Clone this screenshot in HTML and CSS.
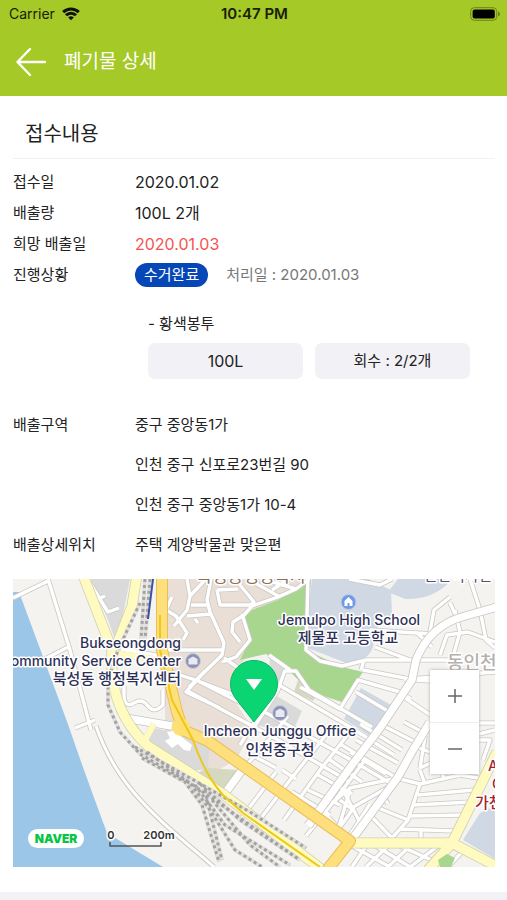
FILE: index.html
```html
<!DOCTYPE html>
<html lang="ko">
<head>
<meta charset="utf-8">
<meta name="viewport" content="width=device-width, initial-scale=1">
<title>폐기물 상세</title>
<link rel="stylesheet" href="styles.css">
</head>
<body>
<header class="top">
  <div class="status">
    <div class="status-left">
      <span>Carrier</span>
      <svg class="wifi" viewBox="0 0 18 14" aria-hidden="true"><path d="M1.2 5.2a11.2 11.2 0 0 1 15.6 0" /><path d="M4 8.3a7 7 0 0 1 10 0" /><path class="wifi-dot" d="M9 13.2 6.2 10.6a4 4 0 0 1 5.6 0z" /></svg>
    </div>
    <span class="clock">10:47 PM</span>
    <div class="status-right">
      <svg class="battery" viewBox="0 0 30 14" aria-hidden="true"><rect class="battery-case" x=".7" y=".7" width="26" height="12.6" rx="3.6"/><rect x="2.6" y="2.6" width="22.2" height="8.8" rx="2"/><path class="battery-tip" d="M28 4.6q2 .8 2 2.4t-2 2.4z"/></svg>
    </div>
  </div>
  <div class="bar">
    <button class="back" type="button" aria-label="뒤로"><svg viewBox="0 0 30 30" aria-hidden="true"><path d="M14 2 1.5 15 14 28M1.5 15H29"/></svg></button>
    <h1>폐기물 상세</h1>
  </div>
</header>
<main>
  <h2>접수내용</h2>
  <dl class="details">
    <dt>접수일</dt><dd class="value">2020.01.02</dd>
    <dt>배출량</dt><dd class="value">100L 2개</dd>
    <dt>희망 배출일</dt><dd class="value alert">2020.01.03</dd>
    <dt>진행상황</dt><dd class="progress"><span class="badge">수거완료</span><span class="muted">처리일 : 2020.01.03</span></dd>
  </dl>
  <section class="bags">
    <h3>- 황색봉투</h3>
    <div class="chips"><div class="chip value">100L</div><div class="chip">회수 : 2/2개</div></div>
  </section>
  <dl class="details place">
    <dt>배출구역</dt><dd>중구 중앙동1가</dd>
    <dd>인천 중구 신포로23번길 90</dd>
    <dd>인천 중구 중앙동1가 10-4</dd>
    <dt>배출상세위치</dt><dd>주택 계양박물관 맞은편</dd>
  </dl>
  <div class="map">
    <svg class="map-art" viewBox="13 579 482 288" role="img" aria-label="지도">
      <defs>
        <g id="minor">
          <path d="M48 579 70 650 91 730M13 598 48 581M43 660 70 646M75 728 95 720M88 580 108 612 119 608M95 600 105 596"/>
          <path d="M172 597 166 610 176 616 187 633 183 640M187 579 190 596 187 610 174 626M190 596 206 579M191 605 208 605 211 616M187 616 211 614 224 643 222 655 189 687M211 579 207 600 211 616M217 590 220 605 233 605 250 605 254 602 240 585 239 579M217 590 238 589M195 619 198 623"/>
          <path d="M252 606 244 615 233 622 232 632 240 642M252 606 278 597 296 589 309 579M242 614 250 640 236 657 222 662M248 579 280 597M263 579 296 589M272 590 289 579M166 650 222 650M224 658 250 676"/>
          <path d="M186 690 230 714 280 741 350 782M190 678 232 694 270 715 346 757 390 783M165 670 198 681 245 705M205 671 186 692 220 708M236 678 270 697M270 697 240 745M285 670 278 690 253 729M279 685 350 727 394 755M285 671 296 671 309 690 372 727M300 687 340 709 358 680 400 692 411 699M356 692 391 713M269 655 290 670"/>
          <path d="M308 579 306 650 320 661 342 666 366 660 416 660M363 670 410 679M364 660 361 670M375 647 410 660M370 630 433 634M416 632 432 647M349 579 380 585 392 579M430 632 434 610 450 597M440 655 447 635 468 632 495 642M455 610 460 632 452 660M416 660 495 660M410 679 495 672M470 579 480 610 486 640 495 648"/>
          <path d="M402 696 432 716M404 679 430 681M450 603 457 618"/>
          <path d="M225 792 245 767 270 738 288 716M258 822 290 780 330 730M276 768 252 755M284 820 320 770 350 732M306 836 335 800 365 760M240 820 276 772M340 744 375 765 400 780M330 760 362 782M318 775 352 794M308 790 340 805M292 792 330 815M282 770 296 779"/>
          <path d="M397 778 350 788 330 805M394 784 355 806 338 830M350 790 338 830M342 788 364 830M320 808 342 832M360 724 402 750M356 740 398 763M350 752 386 774M378 723 413 741M413 750 396 778M404 722 428 735"/>
          <path d="M400 779 420 784 460 775 478 778M420 770 425 784M439 767 445 780M454 765 460 777M420 784 408 820 392 838M418 795 474 790M414 805 471 802M408 816 465 815M400 829 454 831M376 807 408 820M382 794 388 804M370 815 392 838M340 800 353 810M421 831 421 845M370 804 350 835"/>
          <path d="M426 731 420 768M437 760 420 768M430 752 412 745M458 752 437 760M479 734 495 730M478 740 490 740 483 760M430 723 495 723"/>
          <path d="M352 846 390 867M366 846 352 867M388 846 366 867M376 846 410 867M410 846 388 867M438 846 410 867M400 846 436 862M450 845 462 852 448 867"/>
        </g>
        <g id="major">
          <path d="M497 607 465 616Q430 625 416 660L412 680 380 728 352 765 308 826"/>
          <path d="M350 842 398 777 413 750 430 722"/>
          <path d="M223 796 248 762"/>
          <path d="M125 718 172 726M118 650 160 658"/>
        </g>
        <path id="shore-road" d="M96 726C118 790 160 820 214 867"/>
        <path id="loop" d="M124 686V698Q126 708 134 703T148 706T163 705V690"/>
        <g id="pale">
          <path d="M83 575 112 650Q108 710 148 746L223 794 325 872"/>
          <path d="M137 575 132 606 114 652"/>
          <path d="M348 843H452L498 867M428 870 452 843 497 752"/>
          <path class="thin" d="M114 653 160 660M144 742 154 724"/>
        </g>
        <path id="trunk" d="M162 575V650L177 712 183 730 208 741 350 841 327 870"/>
        <g id="rail">
          <path d="M145 579 141 640M150 579 145 640M140 603 118 650 108 680 108 705 120 732 140 754 193 785 300 860"/>
          <path d="M135 747 190 778 250 812 306 848M142 758 185 782 202 805 219 862M147 752 190 783 210 810 235 850 262 867M195 785 225 825 290 865M200 784 240 820 300 860M205 790 212 820 222 860M212 800 250 845 280 867"/>
        </g>
      </defs>
      <path class="land" d="M0 570H500V870H0z"/>
      <path class="district" d="M165 579H300L308 600 244 615 250 650 238 670 234 700 253 729 236 760 209 775 165 730z"/>
      <path class="grey" d="M91 579H130L117 645 108 620zM149 727 210 740 208 770 195 770 146 742zM270 655 288 668 277 682 269 675zM270 692 302 711 292 733 256 725z"/>
      <path class="olive" d="M208 768 238 770 223 794 197 773zM298 680 318 692 313 701 294 692zM361 755 369 758 363 767 356 762z"/>
      <path class="park" d="M242 614 278 600 311 579 306 650 342 667 363 672 342 702 311 692 287 669 266 654 240 660 250 640z"/>
      <path class="campus" d="M312 579H368L391 590 392 615 372 632Q378 651 362 660L346 663 308 648 307 620zM398 579H452Q435 600 405 599L388 592zM361 688 391 705 373 738 344 719zM480 813 495 806V859L463 840z"/>
      <path class="white" d="M167 732 174 731 192 745 190 751 184 750 178 744 172 748 165 741 170 738z"/>
      <path class="sea" d="M13 592H19L69 727Q80 760 107 833L163 867H13z"/>
      <use class="minor-edge" href="#minor"/><use class="minor-fill" href="#minor"/>
      <use class="minor-edge" href="#loop"/><use class="minor-fill" href="#loop"/>
      <use class="minor-edge" href="#shore-road"/><use class="shore-fill" href="#shore-road"/>
      <use class="major-edge" href="#major"/><use class="major-fill" href="#major"/>
      <use class="pale-edge" href="#pale"/><use class="pale-fill" href="#pale"/>
      <use class="rail-bed" href="#rail"/><use class="rail-ties" href="#rail"/>
      <path class="subway" d="M153 579 148 619"/>
      <use class="trunk-edge" href="#trunk"/><use class="trunk-fill" href="#trunk"/>
      <circle class="junction" cx="181" cy="727" r="9"/>
      <path class="line" d="M160 615V650L172 700 193 740Q205 775 223 795L243 813 320 867"/>
      <path class="park" d="M438 860 447 854 455 858 451 867H440z"/>

      <g class="faint" text-anchor="middle">
        <text class="area-name" x="251" y="582">북성동행정복지</text>
        <text class="label-ko" x="458" y="581">인천역사관</text>
        <text class="town" x="447" y="669" text-anchor="start">동인천</text>
      </g>
      <g class="label" text-anchor="end">
        <text x="181" y="648">Bukseongdong</text>
        <text x="181" y="666">Community Service Center</text>
        <text class="label-ko" x="181" y="684">북성동 행정복지센터</text>
      </g>
      <g class="label" text-anchor="middle">
        <text x="349" y="625">Jemulpo High School</text>
        <text class="label-ko" x="348" y="643">제물포 고등학교</text>
      </g>
      <g class="poi"><circle cx="193" cy="661" r="7.5"/><path d="M188.500 659 193 656.500 197.500 659V664.500H188.500z"/></g>
      <g class="poi school"><circle cx="348.500" cy="602" r="7.500"/><path d="M344.500 601 348.500 597 352.500 601V606H349.500V603H347.500V606H344.500z"/></g>
      <g class="poi"><circle cx="280" cy="713" r="7.500"/><path d="M275.500 711 280 708.500 284.500 711V717H275.500z"/></g>
      <path class="pin" d="M254 722 236 699A23.500 23.500 0 1 1 272 699z"/>
      <path class="pin-mark" d="M246 679H262L254 690z"/>
      <g class="label" text-anchor="middle">
        <text x="280" y="736">Incheon Junggu Office</text>
        <text class="label-ko" x="280" y="755">인천중구청</text>
      </g>
      <g class="hospital">
        <text x="488" y="771">A</text><text x="492" y="789">C</text><text class="label-ko" x="475" y="808">가천</text>
      </g>
      <rect class="brand-bg" x="28" y="829" width="56" height="19" rx="9.500"/>
      <text class="brand" x="56" y="843" text-anchor="middle">NAVER</text>
      <g class="scale"><text x="111" y="839" text-anchor="middle">0</text><text x="159" y="839" text-anchor="middle">200m</text><path d="M110 842V846H161V842"/></g>
    </svg>
    <div class="zoom">
      <button type="button" aria-label="확대"><svg viewBox="0 0 16 16" aria-hidden="true"><path d="M1 8H15M8 1V15"/></svg></button>
      <button type="button" aria-label="축소"><svg viewBox="0 0 16 16" aria-hidden="true"><path d="M1 8H15"/></svg></button>
    </div>
  </div>
</main>
</body>
</html>
```
FILE: styles.css
```css
* { box-sizing: border-box; }
html { background: #f2f2f6; }
body { margin: 0; min-height: 100vh; background: #f2f2f6; color: #222; font: 15px/20px Inter, "Noto Sans CJK KR", sans-serif; }
h1, h2, h3, dl, dd { margin: 0; font-weight: 400; }
button { border: 0; padding: 0; background: none; cursor: pointer; }

.top { background: #a5c926; }
.status { display: grid; grid-template-columns: 1fr auto 1fr; align-items: center; height: 28px; padding: 0 7px 0 9px; color: #1a2005; font-size: 14px; }
.status-left { display: flex; align-items: center; gap: 7px; }
.status-right { display: flex; justify-content: flex-end; }
.clock { font-size: 15px; font-weight: 600; }
.wifi { width: 18px; height: 14px; fill: none; stroke: #111; stroke-width: 3; }
.wifi .wifi-dot { fill: #111; stroke: none; }
.battery { width: 30px; height: 14px; }
.battery-case { fill: none; stroke: #6c8419; }
.battery-tip { fill: #6c8419; }
.bar { display: flex; align-items: center; gap: 18px; height: 68px; padding-left: 16px; color: #fff; }
.back { width: 30px; height: 30px; }
.back svg { display: block; fill: none; stroke: #fff; stroke-width: 2.4; stroke-linecap: round; stroke-linejoin: round; }
h1 { font-size: 19px; line-height: 28px; }

main { padding: 13px 12px 25px 13px; background: #fff; }
h2 { padding: 10px 12px 9px; border-bottom: 1px solid #f2f2f2; margin-bottom: 9px; font-size: 20px; line-height: 30px; }
.details { display: grid; grid-template-columns: 122px 1fr; row-gap: 3px; line-height: 28px; }
.details dt { grid-column: 1; }
.details dd { grid-column: 2; }
.value { font-size: 16px; }
.alert { color: #f5544f; }
.progress { display: flex; align-items: center; gap: 18px; }
.badge { padding: 0 9px; border-radius: 12px; background: #0647b8; color: #fff; line-height: 24px; }
.muted { color: #777; }
.bags { padding: 25px 25px 0 135px; }
h3 { font-size: 15px; line-height: 20px; }
.chips { display: grid; grid-template-columns: 1fr 1fr; gap: 12px; margin-top: 9px; }
.chip { border-radius: 7px; background: #f1f1f6; line-height: 36px; text-align: center; }
.place { margin: 32px 0 20px; row-gap: 12px; }

.map { position: relative; }
.map-art { display: block; width: 100%; overflow: hidden; }
.land { fill: #f4f3f0; }
.district { fill: #e9dfd6; }
.grey { fill: #dadada; }
.olive { fill: #d6d8bf; }
.park { fill: #a8d68f; }
.campus { fill: #d0d8e4; }
.white { fill: #fff; }
.sea { fill: #9bc6e8; }
.minor-edge, .minor-fill, .shore-fill, .major-edge, .major-fill, .pale-edge, .pale-fill, .rail-bed, .rail-ties, .trunk-edge, .trunk-fill, .line, .subway { fill: none; stroke-linejoin: round; }
.minor-edge { stroke: #cbc8c4; stroke-width: 5; }
.minor-fill { stroke: #fff; stroke-width: 3.4; }
.shore-fill { stroke: #fff; stroke-width: 3; }
.major-edge { stroke: #c8c6c2; stroke-width: 9; }
.major-fill { stroke: #fff; stroke-width: 7.4; }
.pale-edge { stroke: #d2d0ae; stroke-width: 11; }
.pale-fill { stroke: #fffbc0; stroke-width: 9.4; }
.thin { stroke-width: 6; }
.rail-bed { stroke: #e2e0dc; stroke-width: 4; }
.rail-ties { stroke: #a3a3a3; stroke-width: 3; stroke-dasharray: 3 3; }
.subway { stroke: #3d4fa3; stroke-width: 2; }
.trunk-edge { stroke: #edbd58; stroke-width: 12; }
.trunk-fill { stroke: #fde07c; stroke-width: 10; }
.junction { fill: #fddf72; }
.line { stroke: #edc915; stroke-width: 2; }
.label, .faint, .hospital, .scale { stroke: #fff; stroke-width: 3px; stroke-linejoin: round; paint-order: stroke; }
.label { fill: #2e3157; font-size: 14px; font-weight: 500; }
.label-ko { font-size: 15px; }
.faint { fill: #59506a; font-size: 14px; }
.area-name { fill: #8b7058; font-size: 17px; }
.town { fill: #b5b1ac; font-size: 18px; font-weight: 500; }
.hospital { fill: #a3242e; font-size: 14px; font-weight: 500; }
.poi circle { fill: #8e92b5; stroke: #c9cbdc; stroke-width: 1; }
.poi path { fill: #e8e9f2; }
.school circle { fill: #6d9bea; }
.school path { fill: #fff; }
.pin { fill: #0bd572; stroke: #08b863; stroke-width: 1; }
.pin-mark { fill: #fff; }
.brand-bg { fill: #fff; }
.brand { fill: #05c644; font-size: 12px; font-weight: 900; }
.scale { fill: #333; font-size: 11px; font-weight: 600; }
.scale path { fill: none; stroke: #555; stroke-width: 1.6; }
.zoom { position: absolute; right: 16px; bottom: 93px; display: flex; flex-direction: column; width: 49px; background: #fff; box-shadow: 0 0 3px #aaa; }
.zoom button { display: grid; place-items: center; height: 52px; }
.zoom button + button { border-top: 1px solid #eee; }
.zoom svg { width: 16px; height: 16px; fill: none; stroke: #666; stroke-width: 1.5; }
```
